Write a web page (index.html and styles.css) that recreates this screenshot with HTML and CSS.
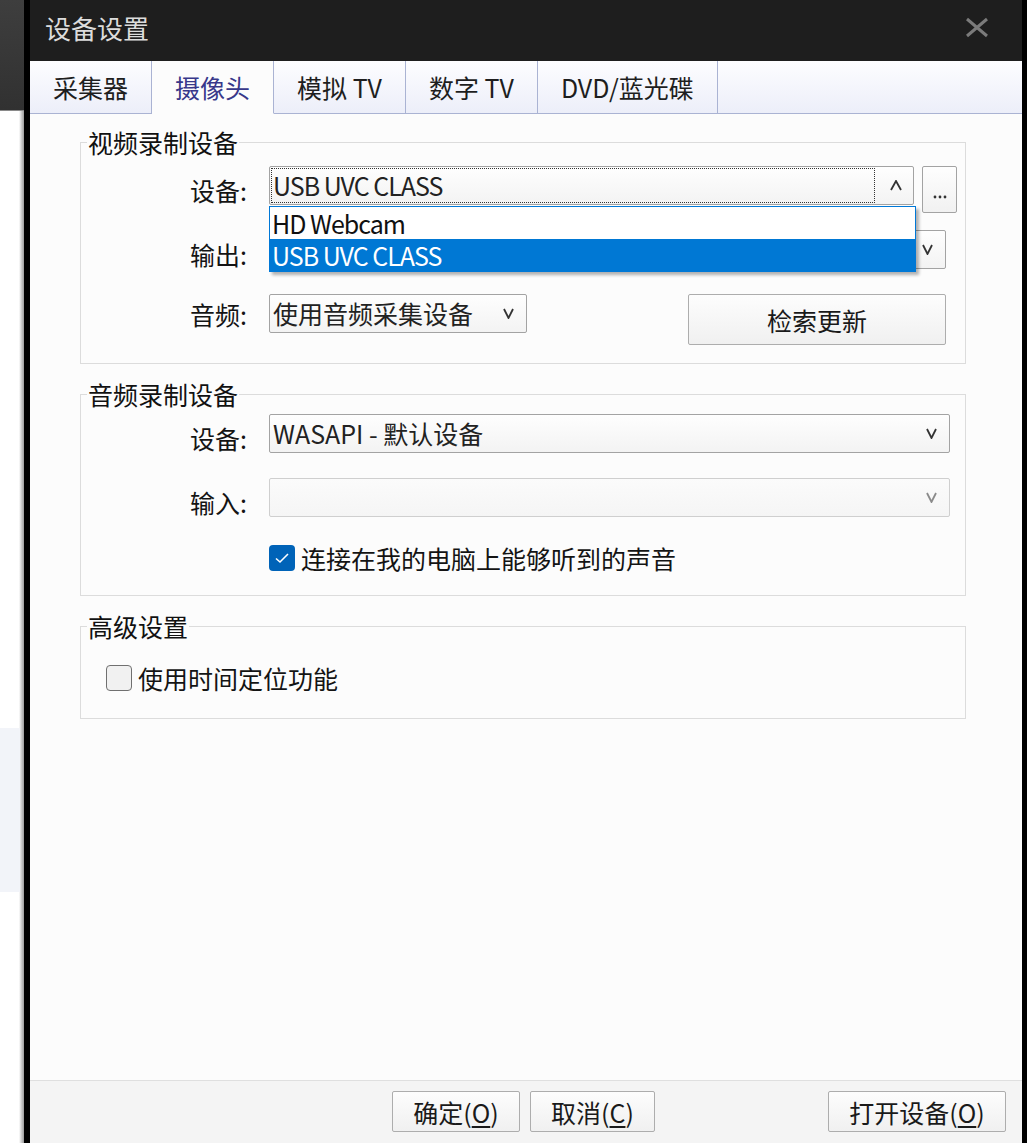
FILE: index.html
```html
<!DOCTYPE html>
<html lang="zh-CN">
<head>
<meta charset="utf-8">
<title>设备设置</title>
<link rel="stylesheet" href="styles.css">
</head>
<body>
<div class="desk">
  <div class="bg-app">
    <div class="bg-top"></div>
    <div class="bg-gap"></div>
    <div class="bg-band"></div>
  </div>
  <div class="dialog">
    <div class="titlebar">
      <span class="title">设备设置</span>
      <svg class="close" width="24" height="21" viewBox="0 0 24 21"><path d="M2 2 L22 19 M22 2 L2 19" stroke="#7b7b7b" stroke-width="3" fill="none"/></svg>
    </div>
    <div class="tabs">
      <div class="tab">采集器</div>
      <div class="tab active">摄像头</div>
      <div class="tab">模拟 TV</div>
      <div class="tab">数字 TV</div>
      <div class="tab">DVD/蓝光碟</div>
      <div class="tab-fill"></div>
    </div>
    <div class="content">
      <fieldset class="group g1">
        <legend>视频录制设备</legend>
        <div class="row r1">
          <span class="lbl">设备:</span>
          <div class="combo focused w645">
            <span class="focus-rect latin">USB UVC CLASS</span>
            <svg class="arrow" width="12" height="11" viewBox="0 0 12 11"><path d="M1 10 L6 1 L11 10" stroke="#333" stroke-width="1.8" fill="none"/></svg>
            <div class="dropdown">
              <div class="dd-item latin">HD Webcam</div>
              <div class="dd-item selected latin">USB UVC CLASS</div>
            </div>
          </div>
          <div class="dots-btn"><svg width="14" height="4" viewBox="0 0 14 4"><circle cx="2" cy="2" r="1.4" fill="#333"/><circle cx="7" cy="2" r="1.4" fill="#333"/><circle cx="12" cy="2" r="1.4" fill="#333"/></svg></div>
        </div>
        <div class="row r2">
          <span class="lbl">输出:</span>
          <div class="combo w677">
            <span class="combo-text"></span>
            <svg class="arrow" width="11" height="11" viewBox="0 0 11 11"><path d="M1 1 L5.5 10 L10 1" stroke="#333" stroke-width="1.8" fill="none"/></svg>
          </div>
        </div>
        <div class="row r3">
          <span class="lbl">音频:</span>
          <div class="combo w258">
            <span class="combo-text">使用音频采集设备</span>
            <svg class="arrow" width="11" height="11" viewBox="0 0 11 11"><path d="M1 1 L5.5 10 L10 1" stroke="#333" stroke-width="1.8" fill="none"/></svg>
          </div>
          <div class="btn btn-refresh">检索更新</div>
        </div>
      </fieldset>

      <fieldset class="group g2">
        <legend>音频录制设备</legend>
        <div class="row r4">
          <span class="lbl">设备:</span>
          <div class="combo w681">
            <span class="combo-text">WASAPI - 默认设备</span>
            <svg class="arrow" width="11" height="11" viewBox="0 0 11 11"><path d="M1 1 L5.5 10 L10 1" stroke="#333" stroke-width="1.8" fill="none"/></svg>
          </div>
        </div>
        <div class="row r5">
          <span class="lbl">输入:</span>
          <div class="combo disabled w681">
            <span class="combo-text"></span>
            <svg class="arrow" width="11" height="11" viewBox="0 0 11 11"><path d="M1 1 L5.5 10 L10 1" stroke="#8a8a8a" stroke-width="1.8" fill="none"/></svg>
          </div>
        </div>
        <div class="row r6">
          <span class="cb on"><svg width="16" height="12" viewBox="0 0 16 12"><path d="M2 6.5 L6 10 L14 2" stroke="#fff" stroke-width="1.6" fill="none"/></svg></span>
          <span class="cb-text">连接在我的电脑上能够听到的声音</span>
        </div>
      </fieldset>

      <fieldset class="group g3">
        <legend>高级设置</legend>
        <div class="row r7">
          <span class="cb off"></span>
          <span class="cb-text">使用时间定位功能</span>
        </div>
      </fieldset>
    </div>
    <div class="footer">
      <div class="btn btn-ok">确定(<u>O</u>)</div>
      <div class="btn btn-cancel">取消(<u>C</u>)</div>
      <div class="btn btn-open">打开设备(<u>O</u>)</div>
    </div>
  </div>
</div>
</body>
</html>
```
FILE: styles.css
```css
* { box-sizing: border-box; }
html, body { margin: 0; padding: 0; }
body {
  width: 1027px;
  height: 1143px;
  overflow: hidden;
  font-family: "Noto Sans CJK SC", sans-serif;
  font-size: 25px;
  color: #141414;
  background: #fff;
}
.desk { display: flex; height: 1143px; }

/* background application strip */
.bg-app {
  width: 24px;
  display: flex;
  flex-direction: column;
  background: linear-gradient(to right, #fff 0, #fff 19px, #d4d4d4 21px, #9a9a9a 24px);
}
.bg-top {
  height: 111px;
  background: linear-gradient(#3e3e3e, #313131);
  border-bottom: 1px solid #8a8a8a;
}
.bg-gap { height: 617px; }
.bg-band { height: 164px; margin-right: 4px; background: #f2f4f9; }

/* dialog */
.dialog {
  flex: 1;
  display: flex;
  flex-direction: column;
  border-left: 6px solid #000;
  border-right: 5px solid #000;
}
.titlebar {
  height: 61px;
  flex: none;
  background: #1e1e1e;
  display: flex;
  align-items: center;
  justify-content: space-between;
  padding: 0 33px 6px 15px;
}
.title { font-size: 26px; line-height: 32px; color: #dcdcdc; }

.tabs {
  height: 53px;
  flex: none;
  display: flex;
  background: linear-gradient(#fdfdff, #eceef9);
}
.tab {
  padding: 0 23px;
  line-height: 52px;
  border-right: 1px solid #aab3d3;
  border-bottom: 1px solid #aab3d3;
  color: #1e1e1e;
  white-space: nowrap;
}
.tab.active {
  background: #fcfcfc;
  border-bottom-color: #fcfcfc;
  color: #38388a;
}
.tab-fill { flex: 1; border-bottom: 1px solid #aab3d3; }

.content {
  flex: 1;
  background: #fcfcfc;
  padding: 13px 56px 0 50px;
}

/* group boxes */
.group {
  margin: 0;
  padding: 0;
  border: 1px solid #dcdcdc;
  min-width: 0;
}
.group legend {
  margin-left: 6px;
  padding: 0 1px;
  font-size: 25px;
  line-height: 30px;
  color: #111;
}
.g1 { padding-bottom: 18px; }
.g2 { margin-top: 15px; padding-bottom: 24px; }
.g3 { margin-top: 15px; padding-bottom: 27px; }

.row { display: flex; align-items: flex-start; }
.lbl {
  flex: none;
  width: 166px;
  margin-right: 22px;
  text-align: right;
  line-height: 39px;
  white-space: nowrap;
}
.r1 { margin-top: 9px; height: 47px; }
.r1 .lbl { margin-top: 5px; }
.r2 { margin-top: 17px; height: 39px; }
.r2 .lbl { margin-top: 5px; }
.r3 { margin-top: 25px; height: 51px; }
.r3 .lbl { margin-top: 1px; }
.r4 { margin-top: 5px; height: 39px; }
.r4 .lbl { margin-top: 5px; }
.r5 { margin-top: 25px; height: 39px; }
.r5 .lbl { margin-top: 5px; }
.r6 { margin-top: 28px; height: 26px; padding-left: 188px; }
.r7 { margin-top: 24px; height: 26px; padding-left: 25px; }

.latin { letter-spacing: -1px; }

/* combo boxes */
.combo {
  position: relative;
  flex: none;
  display: flex;
  align-items: center;
  height: 39px;
  border: 1px solid #a3a3a3;
  border-radius: 2px;
  background: linear-gradient(#fefefe, #f3f3f3);
  padding: 0 12px 0 3px;
}
.combo-text { flex: 1; line-height: 37px; white-space: nowrap; color: #222; }
.combo.focused { padding: 0 11px 0 1px; }
.focus-rect {
  flex: 1;
  align-self: stretch;
  margin: 1px 15px 1px 0;
  border: 1px dotted #333;
  padding-left: 1px;
  line-height: 33px;
  white-space: nowrap;
  color: #222;
}
.combo.disabled { border-color: #cfcfcf; background: linear-gradient(#fbfbfb, #f5f5f5); }
.arrow { flex: none; display: block; }
.w645 { width: 645px; }
.w677 { width: 677px; }
.w258 { width: 258px; }
.w681 { width: 681px; }

.dropdown {
  position: absolute;
  top: 39px;
  left: -1px;
  width: 647px;
  border: 1px solid #0078d7;
  background: #fff;
  box-shadow: 3px 3px 3px rgba(0, 0, 0, 0.3);
  z-index: 5;
}
.dd-item { height: 32px; line-height: 32px; padding-left: 2px; color: #111; white-space: nowrap; }
.dd-item.selected { background: #0078d4; color: #fff; }

.dots-btn {
  flex: none;
  width: 35px;
  height: 47px;
  margin-left: 8px;
  border: 1px solid #a3a3a3;
  border-radius: 2px;
  background: linear-gradient(#fefefe, #f1f1f1);
  display: flex;
  justify-content: center;
  align-items: flex-end;
  padding-bottom: 13px;
}

/* buttons */
.btn {
  flex: none;
  display: flex;
  align-items: center;
  justify-content: center;
  border: 1px solid #adadad;
  border-radius: 2px;
  background: linear-gradient(#fdfdfd, #f0f0f0);
  color: #1a1a1a;
  white-space: nowrap;
}
.btn u { text-underline-offset: 3px; }
.btn-refresh { width: 258px; height: 51px; margin-left: 161px; }

/* checkboxes */
.cb { flex: none; width: 26px; height: 26px; border-radius: 4px; }
.cb.on { background: #0063b8; display: flex; align-items: center; justify-content: center; }
.cb.off { border: 1px solid #707070; background: #f1f1f1; }
.cb-text { margin-left: 6px; line-height: 26px; white-space: nowrap; }

/* footer */
.footer {
  height: 63px;
  flex: none;
  border-top: 1px solid #dfdfdf;
  background: #f4f4f4;
  display: flex;
  align-items: flex-start;
  gap: 10px;
  padding: 10px 16px 0 362px;
}
.btn-ok { width: 128px; height: 41px; }
.btn-cancel { width: 125px; height: 41px; }
.btn-open { width: 178px; height: 41px; margin-left: auto; }
```
